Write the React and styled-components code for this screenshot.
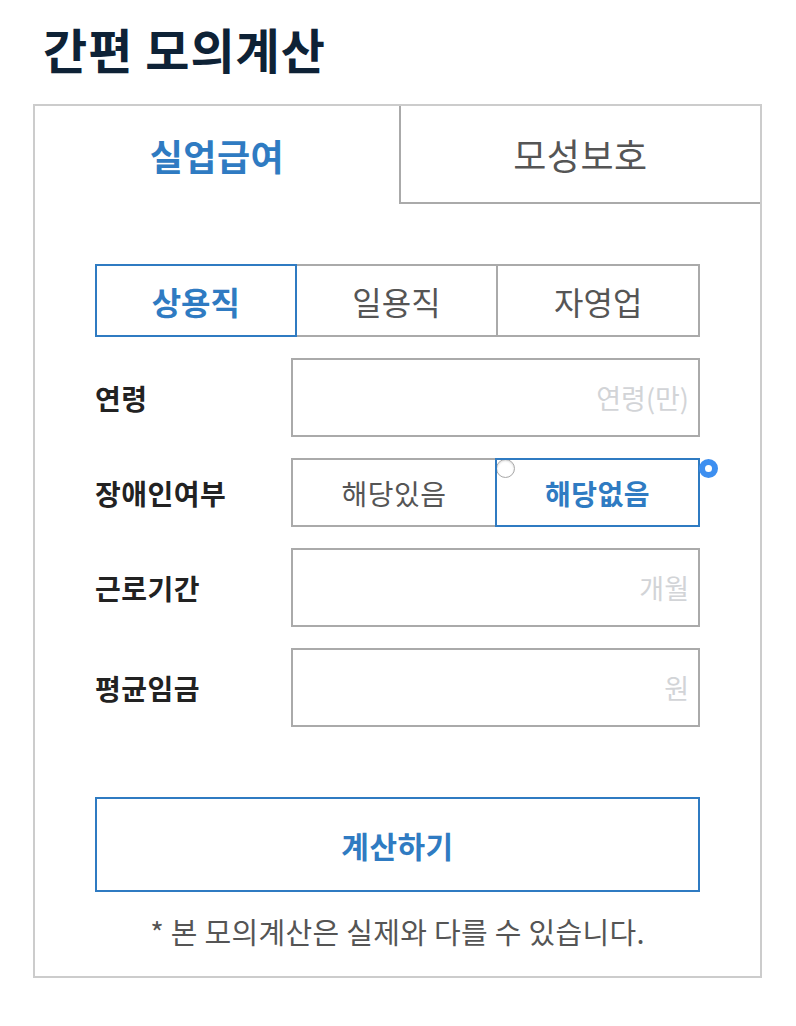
import React, { useState } from "react";
import styled, { createGlobalStyle } from "styled-components";

const GlobalStyle = createGlobalStyle`
  body {
    margin: 0;
    background: #fff;
    font-family: "Noto Sans CJK KR", "Noto Sans", sans-serif;
  }
`;

const Page = styled.div`
  width: 796px;
  padding: 13px 0 0 33px;
  box-sizing: border-box;
`;

const Title = styled.h1`
  margin: 0 0 21px 10px;
  font-size: 48px;
  line-height: 70px;
  font-weight: 700;
  color: #0e2236;
  letter-spacing: 1px;
`;

const Card = styled.div`
  width: 729px;
  border: 2px solid #ccc;
  box-sizing: border-box;
`;

const Tabs = styled.div`
  display: grid;
  grid-template-columns: 364px 1fr;
`;

const Tab = styled.div`
  height: ${(p) => (p.active ? "98px" : "96px")};
  display: flex;
  align-items: center;
  justify-content: center;
  font-size: 36px;
  font-weight: ${(p) => (p.active ? 700 : 400)};
  color: ${(p) => (p.active ? "#2f7bc2" : "#555")};
  border-left: ${(p) => (p.active ? "none" : "2px solid #aaa")};
  border-bottom: ${(p) => (p.active ? "none" : "2px solid #aaa")};
  letter-spacing: 0.5px;
  cursor: pointer;
`;

const Body = styled.div`
  padding: 60px 60px 24px;
`;

const SubTabs = styled.div`
  display: grid;
  grid-template-columns: repeat(3, 1fr);
  height: 73px;
`;

const SubTab = styled.div`
  position: relative;
  z-index: ${(p) => (p.active ? 1 : 0)};
  margin-left: ${(p) => (p.first ? "0" : "-2px")};
  border: 2px solid ${(p) => (p.active ? "#2f7bc2" : "#aaa")};
  display: flex;
  align-items: center;
  justify-content: center;
  font-size: 32px;
  font-weight: ${(p) => (p.active ? 700 : 400)};
  color: ${(p) => (p.active ? "#2f7bc2" : "#555")};
  cursor: pointer;
`;

const Row = styled.div`
  display: grid;
  grid-template-columns: 196px 1fr;
  align-items: center;
  margin-top: 21px;
`;

const Label = styled.div`
  font-size: 28px;
  font-weight: 700;
  color: #222;
  letter-spacing: 0.5px;
`;

const Input = styled.input`
  height: 79px;
  width: 100%;
  box-sizing: border-box;
  border: 2px solid #aaa;
  padding: 0 9px 0 12px;
  text-align: right;
  font-family: inherit;
  font-size: 27px;
  color: #222;
  outline: none;
  &::placeholder {
    color: #d2d4d7;
  }
`;

const Options = styled.div`
  display: grid;
  grid-template-columns: 206px 1fr;
  height: 69px;
`;

const Option = styled.label`
  position: relative;
  z-index: ${(p) => (p.checked ? 1 : 0)};
  margin-left: ${(p) => (p.first ? "0" : "-2px")};
  border: 2px solid ${(p) => (p.checked ? "#2f7bc2" : "#aaa")};
  display: flex;
  align-items: center;
  justify-content: center;
  font-size: 28px;
  font-weight: ${(p) => (p.checked ? 700 : 400)};
  color: ${(p) => (p.checked ? "#2f7bc2" : "#555")};
  letter-spacing: 0.5px;
  cursor: pointer;
`;

const Radio = styled.span`
  position: absolute;
  z-index: 2;
  top: -1px;
  right: -20px;
  width: 19px;
  height: 19px;
  box-sizing: border-box;
  border-radius: 50%;
  background: #fff;
  border: ${(p) => (p.checked ? "6px solid #3d8ff0" : "1px solid #a8a8a8")};
  box-shadow: ${(p) => (p.checked ? "none" : "inset 0 1px 2px rgba(0,0,0,0.15)")};
`;

const Button = styled.button`
  display: block;
  width: 100%;
  height: 95px;
  margin-top: 70px;
  border: 2px solid #2f7bc2;
  background: #fff;
  font-family: inherit;
  font-size: 30px;
  font-weight: 700;
  color: #2f7bc2;
  letter-spacing: 0.5px;
  cursor: pointer;
`;

const Note = styled.p`
  margin: 18px 0 0;
  text-align: center;
  font-size: 29px;
  line-height: 42px;
  color: #555;
  letter-spacing: 0.3px;
`;

const fields = [
  { label: "연령", placeholder: "연령(만)" },
  { label: "근로기간", placeholder: "개월" },
  { label: "평균임금", placeholder: "원" },
];

export default function App() {
  const [tab, setTab] = useState(0);
  const [kind, setKind] = useState(0);
  const [disabled, setDisabled] = useState(1);

  const renderField = (f) => (
    <Row key={f.label}>
      <Label>{f.label}</Label>
      <Input placeholder={f.placeholder} />
    </Row>
  );

  return (
    <Page>
      <GlobalStyle />
      <Title>간편 모의계산</Title>
      <Card>
        <Tabs>
          {["실업급여", "모성보호"].map((t, i) => (
            <Tab key={t} active={tab === i} onClick={() => setTab(i)}>
              {t}
            </Tab>
          ))}
        </Tabs>
        <Body>
          <SubTabs>
            {["상용직", "일용직", "자영업"].map((t, i) => (
              <SubTab key={t} first={i === 0} active={kind === i} onClick={() => setKind(i)}>
                {t}
              </SubTab>
            ))}
          </SubTabs>
          {renderField(fields[0])}
          <Row>
            <Label>장애인여부</Label>
            <Options>
              {["해당있음", "해당없음"].map((t, i) => (
                <Option key={t} first={i === 0} checked={disabled === i} onClick={() => setDisabled(i)}>
                  {t}
                  <Radio checked={disabled === i} />
                </Option>
              ))}
            </Options>
          </Row>
          {renderField(fields[1])}
          {renderField(fields[2])}
          <Button>계산하기</Button>
          <Note>* 본 모의계산은 실제와 다를 수 있습니다.</Note>
        </Body>
      </Card>
    </Page>
  );
}
